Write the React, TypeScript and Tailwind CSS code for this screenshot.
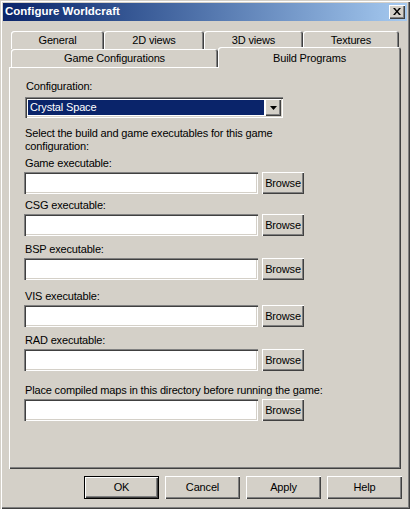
import React from "react";

const raised =
  "shadow-[inset_1px_1px_#ffffff,inset_-1px_-1px_#404040,inset_-2px_-2px_#808080]";
const sunken =
  "shadow-[inset_1px_1px_#808080,inset_2px_2px_#404040,inset_-1px_-1px_#ffffff,inset_-2px_-2px_#d4d0c8]";
const tabShadow =
  "shadow-[inset_1px_1px_#ffffff,inset_-1px_0_#404040,inset_-2px_0_#808080]";

function Tab({ w, label }: { w: string; label: string }) {
  return (
    <div
      className={`${w} h-full flex items-center justify-center rounded-t-[3px] bg-[#d4d0c8] ${tabShadow}`}
    >
      <span className="pt-[1px]">{label}</span>
    </div>
  );
}

function Field({ label, mt }: { label: string; mt: string }) {
  return (
    <div className={`${mt} flex flex-col`}>
      <div className="h-[13px] leading-[13px] ml-[1px] whitespace-nowrap">{label}</div>
      <div className="mt-[2px] flex items-start">
        <div className={`w-[234px] h-[22px] bg-white ${sunken}`} />
        <div
          className={`ml-[4px] w-[42px] h-[22px] flex items-center justify-center bg-[#d4d0c8] ${raised}`}
        >
          Browse
        </div>
      </div>
    </div>
  );
}

export default function App() {
  return (
    <div
      className="w-[410px] h-[509px] bg-[#d4d0c8] p-[3px] flex flex-col text-[11px] tracking-[-0.16px] text-black shadow-[inset_1px_1px_#d4d0c8,inset_2px_2px_#ffffff,inset_-1px_-1px_#404040,inset_-2px_-2px_#808080]"
      style={{ fontFamily: '"Liberation Sans", Arial, sans-serif' }}
    >
      {/* Title bar */}
      <div className="h-[18px] flex items-center bg-gradient-to-r from-[#0a246a] to-[#a6caf0] pl-[2px] pr-[2px]">
        <span className="text-white font-bold text-[11.5px] tracking-normal flex-1">Configure Worldcraft</span>
        <div className={`w-[16px] h-[14px] bg-[#d4d0c8] flex items-center justify-center ${raised}`}>
          <svg width="8" height="7" viewBox="0 0 8 7" className="mb-[1px]">
            <path d="M0 0h2l2 2.5L6 0h2L5 3.5 8 7H6L4 4.5 2 7H0l3-3.5z" fill="#000" />
          </svg>
        </div>
      </div>

      {/* Tab control */}
      <div className="ml-[6px] mt-[10px] w-[392px] flex flex-col">
        <div className="h-[18px] flex pl-[2px]">
          <Tab w="w-[93px]" label="General" />
          <Tab w="w-[100px]" label="2D views" />
          <Tab w="w-[99px]" label="3D views" />
          <Tab w="w-[96px]" label="Textures" />
        </div>
        <div className="h-[18px] flex items-start pl-[2px]">
          <div
            className={`w-[207px] h-[18px] flex items-center justify-center rounded-t-[3px] bg-[#d4d0c8] ${tabShadow}`}
          >
            <span className="pt-[1px]">Game Configurations</span>
          </div>
          <div
            className={`relative z-10 w-[183px] h-[21px] -mt-[2px] flex items-start justify-center pt-[3px] rounded-t-[3px] bg-[#d4d0c8] ${tabShadow}`}
          >
            <span>Build Programs</span>
          </div>
        </div>

        {/* Panel */}
        <div
          className={`h-[402px] bg-[#d4d0c8] pt-[13px] pl-[15px] flex flex-col shadow-[inset_1px_1px_#ffffff,inset_-1px_-1px_#404040,inset_-2px_-2px_#808080]`}
        >
          <div className="h-[13px] leading-[13px] ml-[2px]">Configuration:</div>
          <div
            className={`mt-[4px] ml-[1px] w-[258px] h-[21px] bg-white p-[2px] flex ${sunken}`}
          >
            <div className="flex-1 m-[1px] bg-[#0a246a] text-white leading-[15px] pl-[2px]">
              Crystal Space
            </div>
            <div
              className={`w-[16px] h-[17px] bg-[#d4d0c8] flex items-center justify-center ${raised}`}
            >
              <svg width="7" height="4" viewBox="0 0 7 4">
                <path d="M0 0h7L3.5 4z" fill="#000" />
              </svg>
            </div>
          </div>
          <div className="mt-[9px] ml-[1px] leading-[13px]">
            Select the build and game executables for this game
            <br />
            configuration:
          </div>
          <Field label="Game executable:" mt="mt-[4px]" />
          <Field label="CSG executable:" mt="mt-[5px]" />
          <Field label="BSP executable:" mt="mt-[7px]" />
          <Field label="VIS executable:" mt="mt-[10px]" />
          <Field label="RAD executable:" mt="mt-[7px]" />
          <Field label="Place compiled maps in this directory before running the game:" mt="mt-[13px]" />
        </div>
      </div>

      {/* Buttons */}
      <div className="mt-[7px] flex justify-end gap-[6px] pr-[5px]">
        <div className="w-[75px] h-[23px] border border-black">
          <div className={`w-full h-full flex items-center justify-center bg-[#d4d0c8] ${raised}`}>OK</div>
        </div>
        <div className={`w-[75px] h-[23px] flex items-center justify-center bg-[#d4d0c8] ${raised}`}>Cancel</div>
        <div className={`w-[75px] h-[23px] flex items-center justify-center bg-[#d4d0c8] ${raised}`}>Apply</div>
        <div className={`w-[75px] h-[23px] flex items-center justify-center bg-[#d4d0c8] ${raised}`}>Help</div>
      </div>
    </div>
  );
}
